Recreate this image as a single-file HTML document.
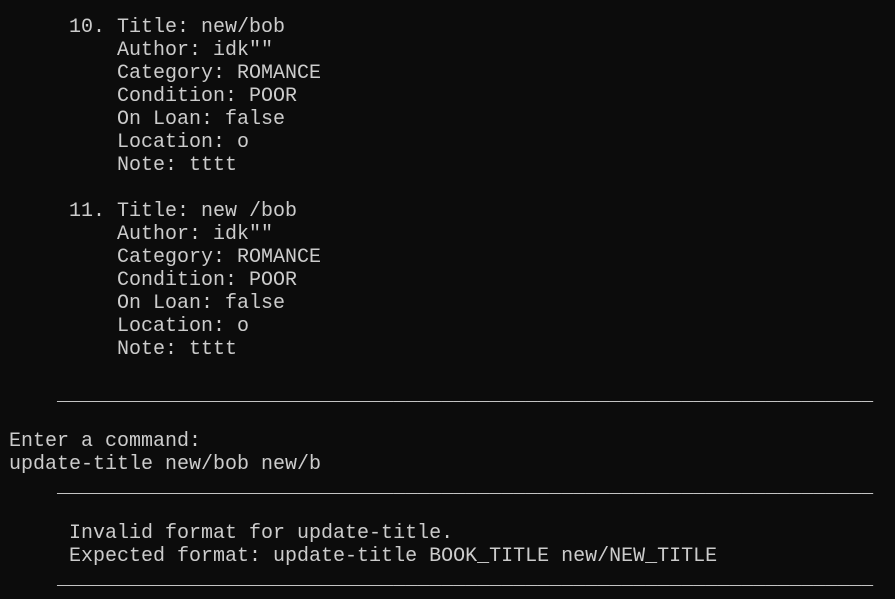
<!DOCTYPE html>
<html><head><meta charset="utf-8"><style>
html,body{margin:0;padding:0;background:#0c0c0c;width:895px;height:599px;overflow:hidden}
pre{margin:0;position:absolute;left:9px;top:16px;font-family:"Liberation Mono","DejaVu Sans Mono",monospace;font-size:20px;line-height:23px;color:#cccccc;letter-spacing:0px}
</style></head><body><pre>     10. Title: new/bob
         Author: idk""
         Category: ROMANCE
         Condition: POOR
         On Loan: false
         Location: o
         Note: tttt

     11. Title: new /bob
         Author: idk""
         Category: ROMANCE
         Condition: POOR
         On Loan: false
         Location: o
         Note: tttt

    ____________________________________________________________________

Enter a command:
update-title new/bob new/b
    ____________________________________________________________________

     Invalid format for update-title.
     Expected format: update-title BOOK_TITLE new/NEW_TITLE
    ____________________________________________________________________
</pre></body></html>
